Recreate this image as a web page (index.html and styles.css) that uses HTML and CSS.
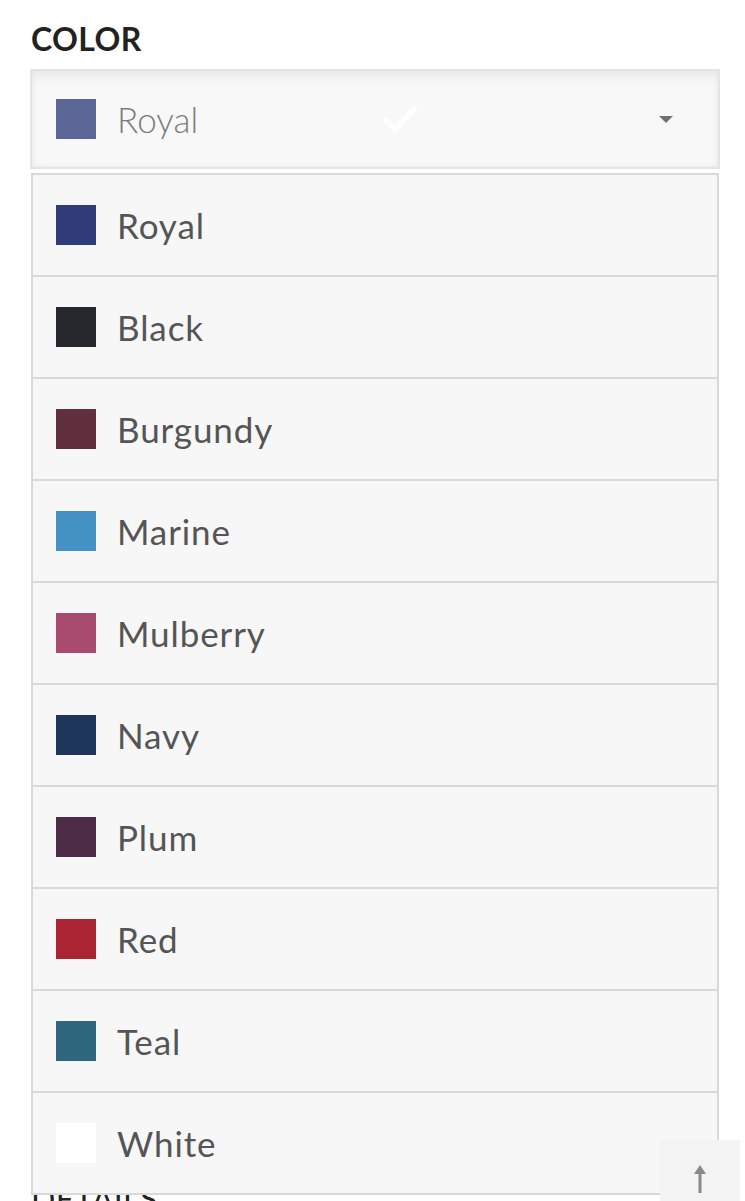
FILE: index.html
```html
<!DOCTYPE html>
<html lang="en">
<head>
    <meta charset="UTF-8">
    <meta name="viewport" content="width=device-width, initial-scale=1.0">
    <title>Color</title>
    <link rel="stylesheet" href="styles.css">
</head>
<body>
    <div class="page">
        <h2 class="label">COLOR</h2>

        <div class="dropdown">
            <div class="select">
                <span class="swatch" style="background: #5b6596"></span>
                <span class="select-text">Royal</span>
                <svg class="check" width="34" height="28" viewBox="0 0 34 28">
                    <path d="M3 15 L12 24 L31 4" fill="none" stroke="#ffffff" stroke-width="6" stroke-linecap="round" stroke-linejoin="round"/>
                </svg>
                <span class="caret"></span>
            </div>

            <ul class="options">
                <li class="option"><span class="swatch" style="background: #303b79"></span>Royal</li>
                <li class="option"><span class="swatch" style="background: #25282d"></span>Black</li>
                <li class="option"><span class="swatch" style="background: #62303d"></span>Burgundy</li>
                <li class="option"><span class="swatch" style="background: #4492c4"></span>Marine</li>
                <li class="option"><span class="swatch" style="background: #a94b6f"></span>Mulberry</li>
                <li class="option"><span class="swatch" style="background: #1f365c"></span>Navy</li>
                <li class="option"><span class="swatch" style="background: #4b2b45"></span>Plum</li>
                <li class="option"><span class="swatch" style="background: #ab2434"></span>Red</li>
                <li class="option"><span class="swatch" style="background: #2e677d"></span>Teal</li>
                <li class="option"><span class="swatch" style="background: #ffffff"></span>White</li>
            </ul>
        </div>

        <h2 class="label details">DETAILS</h2>
    </div>

    <button class="to-top" aria-label="Back to top">
        <svg width="16" height="30" viewBox="0 0 16 30">
            <path d="M8 1 L14 10 L2 10 Z" fill="#8a8a8a"/>
            <rect x="6.5" y="8" width="3" height="21" fill="#8a8a8a"/>
        </svg>
    </button>
</body>
</html>
```

FILE: styles.css
```css
* {
    margin: 0;
    padding: 0;
    box-sizing: border-box;
}

body {
    font-family: 'Lato', 'Helvetica', sans-serif;
    background: #ffffff;
    color: #222;
    overflow: hidden;
    height: 1201px;
}

.page {
    padding: 21px 25px 0 30px;
}

.label {
    font-size: 32px;
    font-weight: 700;
    color: #222;
    letter-spacing: 0.4px;
    line-height: 36px;
    margin-left: 1px;
    margin-bottom: 12px;
}

.dropdown {
    position: relative;
}

/* champ ferme */
.select {
    height: 100px;
    border: 2px solid #e4e4e4;
    background: #f8f8f8;
    box-shadow: inset 0 6px 10px rgba(0, 0, 0, 0.06), inset 0 -2px 4px rgba(0, 0, 0, 0.03);
    display: flex;
    align-items: center;
    padding-left: 24px;
}

.swatch {
    display: inline-block;
    width: 40px;
    height: 40px;
    flex-shrink: 0;
}

.select-text {
    width: 266px;
    margin-left: 21px;
    font-size: 35px;
    font-weight: 300;
    color: #7c7c7c;
}

.check {
    opacity: 0.9;
}

.caret {
    margin-left: auto;
    margin-right: 45px;
    width: 0;
    height: 0;
    border-left: 7px solid transparent;
    border-right: 7px solid transparent;
    border-top: 7px solid #707070;
}

/* liste deroulante */
.options {
    list-style: none;
    position: absolute;
    top: 104px;
    left: 1px;
    right: 1px;
    z-index: 5;
    background: #f7f7f7;
    border: 2px solid #d9d9d9;
}

.option {
    height: 102px;
    border-top: 2px solid #d9d9d9;
    display: flex;
    align-items: center;
    padding-left: 23px;
    font-size: 35px;
    letter-spacing: 0.9px;
    color: #555;
}

.option:first-child {
    height: 100px;
    border-top: none;
}

.option .swatch {
    margin-right: 21px;
}

.details {
    margin-top: 1012px;
    font-weight: 400;
}

.to-top {
    position: fixed;
    right: 5px;
    bottom: 0;
    width: 80px;
    height: 61px;
    border: none;
    background: #f3f3f3;
    z-index: 10;
    display: flex;
    align-items: flex-end;
    justify-content: center;
    padding-bottom: 7px;
}
```
